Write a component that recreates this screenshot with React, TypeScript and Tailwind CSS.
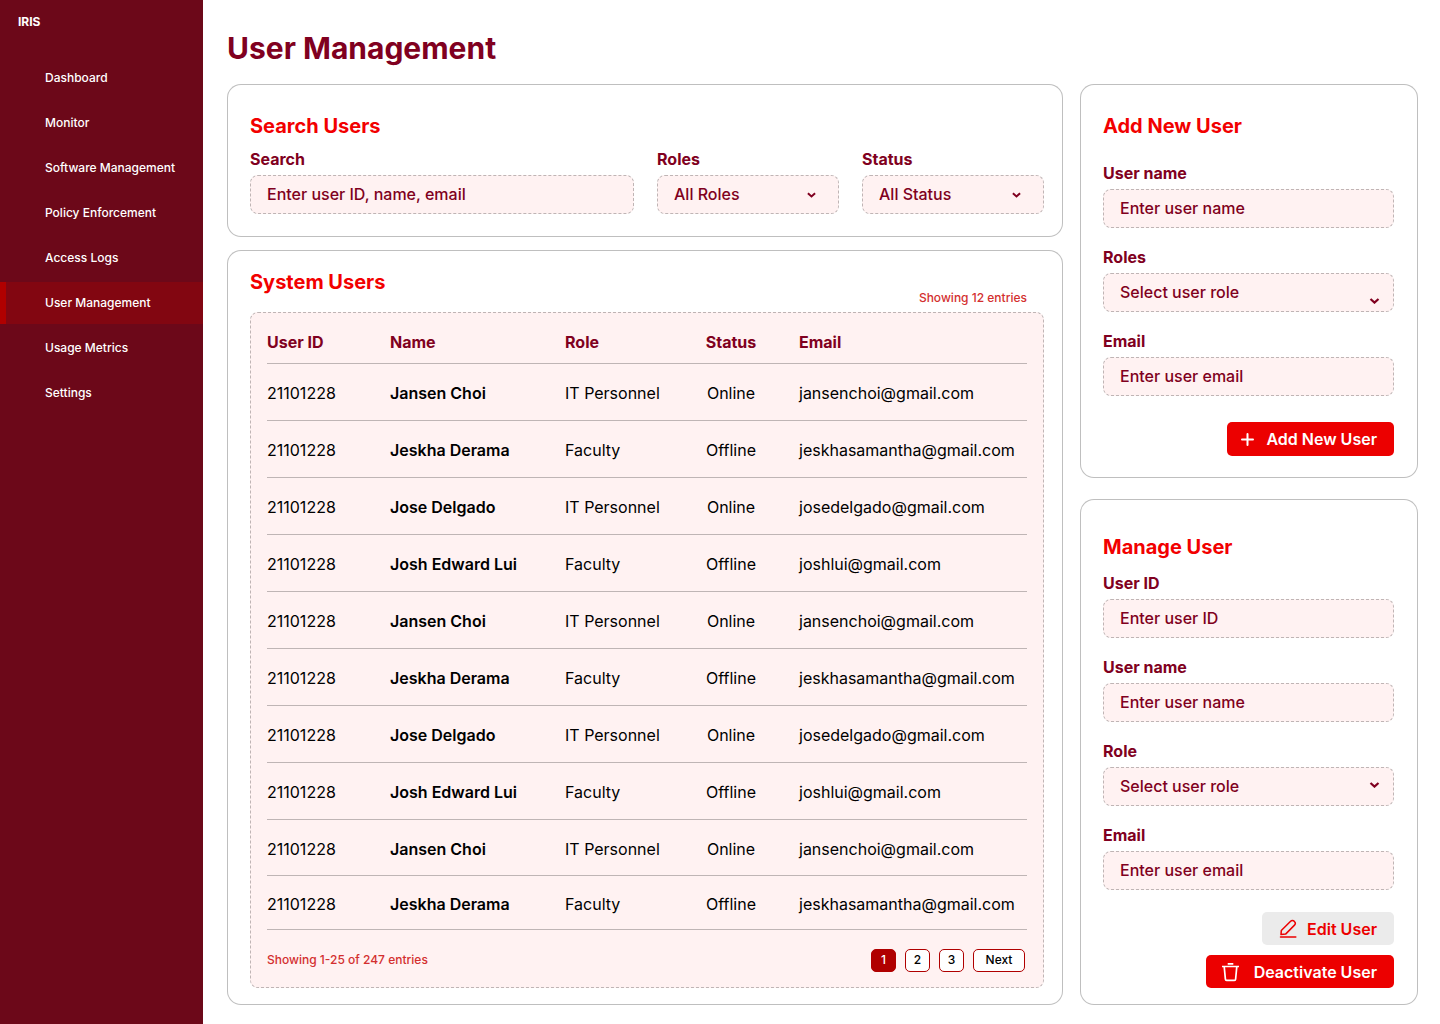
import { useId } from "react";
import type { ReactNode } from "react";

const NAV = [
  "Dashboard",
  "Monitor",
  "Software Management",
  "Policy Enforcement",
  "Access Logs",
  "User Management",
  "Usage Metrics",
  "Settings",
];

const PEOPLE = [
  { name: "Jansen Choi", role: "IT Personnel", status: "Online", email: "jansenchoi@gmail.com" },
  { name: "Jeskha Derama", role: "Faculty", status: "Offline", email: "jeskhasamantha@gmail.com" },
  { name: "Jose Delgado", role: "IT Personnel", status: "Online", email: "josedelgado@gmail.com" },
  { name: "Josh Edward Lui", role: "Faculty", status: "Offline", email: "joshlui@gmail.com" },
];

const ROWS = Array.from({ length: 10 }, (_, i) => PEOPLE[i % PEOPLE.length]);

function Chevron({ className }: { className: string }) {
  return (
    <svg
      viewBox="0 0 10 6"
      fill="none"
      stroke="currentColor"
      strokeWidth="2.2"
      aria-hidden="true"
      className={`pointer-events-none absolute text-[#800020] ${className}`}
    >
      <path d="M1 1l4 3.6L9 1" />
    </svg>
  );
}

function PlusIcon() {
  return (
    <svg viewBox="0 0 13 13" fill="none" stroke="currentColor" strokeWidth="2" strokeLinecap="round" className="size-[13px]" aria-hidden="true">
      <path d="M6.5 1v11M1 6.5h11" />
    </svg>
  );
}

function PencilIcon() {
  return (
    <svg viewBox="0 0 18 19" fill="none" stroke="currentColor" strokeWidth="1.5" strokeLinecap="round" strokeLinejoin="round" className="h-[19px] w-[18px]" aria-hidden="true">
      <path d="M2 15.6l.3-4.1L11.6 2.2a2.4 2.4 0 0 1 3.6.1l.4.5a2.4 2.4 0 0 1-.1 3.3L6.6 15.1z" />
      <path d="M1.5 18h15.3" />
    </svg>
  );
}

function TrashIcon() {
  return (
    <svg viewBox="0 0 19 20" fill="none" stroke="currentColor" strokeWidth="1.7" className="h-5 w-[19px]" aria-hidden="true">
      <path d="M6.7 1.8h5.6M1 4.5h17M3.2 4.6l1.2 12.6a1.2 1.2 0 0 0 1.2 1.1h7.8a1.2 1.2 0 0 0 1.2-1.1l1.2-12.6" />
    </svg>
  );
}

const CONTROL =
  "block h-[39px] w-full appearance-none rounded-lg border border-dashed border-black/25 bg-[#fff2f2] px-4 pb-0.5 text-base font-medium text-[#800020] outline-none placeholder:text-[#800020] placeholder:opacity-100 focus:border-solid";

function Label({ htmlFor, children }: { htmlFor: string; children: ReactNode }) {
  return (
    <label htmlFor={htmlFor} className="mb-1 block text-base leading-6 font-bold text-[#800020]">
      {children}
    </label>
  );
}

function TextField({ label, placeholder, type = "text" }: { label: string; placeholder: string; type?: string }) {
  const id = useId();
  return (
    <div>
      <Label htmlFor={id}>{label}</Label>
      <input id={id} type={type} placeholder={placeholder} className={CONTROL} />
    </div>
  );
}

function SelectField({ label, options, chevron }: { label: string; options: string[]; chevron: string }) {
  const id = useId();
  return (
    <div>
      <Label htmlFor={id}>{label}</Label>
      <div className="relative">
        <select id={id} className={CONTROL}>
          {options.map((o) => (
            <option key={o}>{o}</option>
          ))}
        </select>
        <Chevron className={chevron} />
      </div>
    </div>
  );
}

function Heading({ children }: { children: ReactNode }) {
  return <h2 className="text-xl leading-6 font-bold text-[#f20000]">{children}</h2>;
}

const CARD = "rounded-[14px] border border-black/25 bg-white";
const PAGE_BUTTON = "h-[23px] rounded-[5px] border border-[#b00000] text-xs leading-4 font-medium";
const ACTION = "flex items-center rounded-[5px] pr-[17px] text-base font-semibold";

export default function App() {
  return (
    <div className="flex min-h-screen bg-white font-['Inter',sans-serif]">
      <aside className="w-[203px] shrink-0 bg-[#6c0819] text-xs text-white">
        <div className="px-[18px] pt-3.5 leading-4 font-bold">IRIS</div>
        <nav className="mt-[27px] flex flex-col gap-[3px]">
          {NAV.map((item) =>
            item === "User Management" ? (
              <a key={item} href="#" aria-current="page" className="flex h-[42px] items-center border-l-[6px] border-[#b00000] bg-[#820611] pl-[39px] font-medium">
                {item}
              </a>
            ) : (
              <a key={item} href="#" className="flex h-[42px] items-center pl-[45px] font-medium">
                {item}
              </a>
            ),
          )}
        </nav>
      </aside>

      <main className="min-w-0 flex-1 pt-7 pr-[22px] pb-[19px] pl-6">
        <h1 className="mb-4 text-3xl leading-10 font-bold text-[#800020]">User Management</h1>

        <div className="grid grid-cols-[minmax(0,1fr)_338px] gap-[17px]">
          <div className="flex flex-col gap-[13px]">
            <section className={`${CARD} pt-[29px] pr-[18px] pb-[22px] pl-[22px]`}>
              <Heading>Search Users</Heading>
              <div className="mt-[9px] grid grid-cols-[minmax(0,1fr)_182px_182px] gap-[23px]">
                <TextField label="Search" placeholder="Enter user ID, name, email" />
                <SelectField label="Roles" options={["All Roles", "IT Personnel", "Faculty"]} chevron="top-[17px] right-[23px] h-[6px] w-[9px]" />
                <SelectField label="Status" options={["All Status", "Online", "Offline"]} chevron="top-[17px] right-[23px] h-[6px] w-[9px]" />
              </div>
            </section>

            <section className={`${CARD} flex-1 pt-[19px] pr-[18px] pb-4 pl-[22px]`}>
              <div className="mb-1.5 flex justify-between pr-[17px]">
                <Heading>System Users</Heading>
                <p className="mt-5 text-xs leading-4 font-medium text-[#d32f2f]">Showing 12 entries</p>
              </div>
              <div className="rounded-lg border border-dashed border-black/25 bg-[#fff2f2] px-4 pb-[15px]">
                <table className="w-full table-fixed text-left text-base leading-6 text-black">
                  <colgroup>
                    <col className="w-[123px]" />
                    <col className="w-[175px]" />
                    <col className="w-[140px]" />
                    <col className="w-[94px]" />
                    <col />
                  </colgroup>
                  <thead>
                    <tr className="h-[50px] border-b border-black/25 text-[#800020] *:pt-2 *:font-bold">
                      <th scope="col">User ID</th>
                      <th scope="col">Name</th>
                      <th scope="col">Role</th>
                      <th scope="col" className="pr-[42px] text-center">Status</th>
                      <th scope="col">Email</th>
                    </tr>
                  </thead>
                  <tbody>
                    {ROWS.map((p, i) => (
                      <tr key={i} className="h-[57px] border-b border-black/25 *:pt-[3px] nth-last-2:h-[56px] last:h-[54px]">
                        <td>21101228</td>
                        <td className="font-semibold">{p.name}</td>
                        <td>{p.role}</td>
                        <td className="pr-[42px] text-center">{p.status}</td>
                        <td>{p.email}</td>
                      </tr>
                    ))}
                  </tbody>
                </table>
                <div className="mt-[19px] flex items-center justify-between pr-0.5">
                  <p className="text-xs leading-4 font-medium text-[#d32f2f]">Showing 1-25 of 247 entries</p>
                  <div className="flex gap-[9px]">
                    <button type="button" aria-current="page" className={`${PAGE_BUTTON} w-[25px] bg-[#b00000] text-white`}>1</button>
                    <button type="button" className={`${PAGE_BUTTON} w-[25px] bg-white text-black`}>2</button>
                    <button type="button" className={`${PAGE_BUTTON} w-[25px] bg-white text-black`}>3</button>
                    <button type="button" className={`${PAGE_BUTTON} w-[52px] bg-white text-black`}>Next</button>
                  </div>
                </div>
              </div>
            </section>
          </div>

          <div className="flex flex-col gap-[21px]">
            <section className={`${CARD} pt-[29px] pr-[23px] pb-[21px] pl-[22px]`}>
              <Heading>Add New User</Heading>
              <form className="mt-[23px]">
                <div className="flex flex-col gap-[17px]">
                  <TextField label="User name" placeholder="Enter user name" />
                  <SelectField label="Roles" options={["Select user role", "IT Personnel", "Faculty"]} chevron="right-[14px] bottom-2 h-[6px] w-[11px]" />
                  <TextField label="Email" type="email" placeholder="Enter user email" />
                </div>
                <div className="mt-[26px] flex justify-end">
                  <button type="button" className={`${ACTION} h-[34px] gap-3 bg-[#ec0000] pl-[14px] text-white`}>
                    <PlusIcon />
                    Add New User
                  </button>
                </div>
              </form>
            </section>

            <section className={`${CARD} flex-1 pt-[35px] pr-[23px] pb-4 pl-[22px]`}>
              <Heading>Manage User</Heading>
              <form className="mt-3">
                <div className="flex flex-col gap-[17px]">
                  <TextField label="User ID" placeholder="Enter user ID" />
                  <TextField label="User name" placeholder="Enter user name" />
                  <SelectField label="Role" options={["Select user role", "IT Personnel", "Faculty"]} chevron="top-[15px] right-[14px] h-[6px] w-[11px]" />
                  <TextField label="Email" type="email" placeholder="Enter user email" />
                </div>
                <div className="mt-[22px] flex flex-col items-end gap-2.5">
                  <button type="button" className={`${ACTION} h-[33px] gap-2.5 bg-[#ebebeb] pl-[17px] text-[#ec0000]`}>
                    <PencilIcon />
                    Edit User
                  </button>
                  <button type="button" className={`${ACTION} h-[33px] gap-[14px] bg-[#ec0000] pl-[15px] text-white`}>
                    <TrashIcon />
                    Deactivate User
                  </button>
                </div>
              </form>
            </section>
          </div>
        </div>
      </main>
    </div>
  );
}
